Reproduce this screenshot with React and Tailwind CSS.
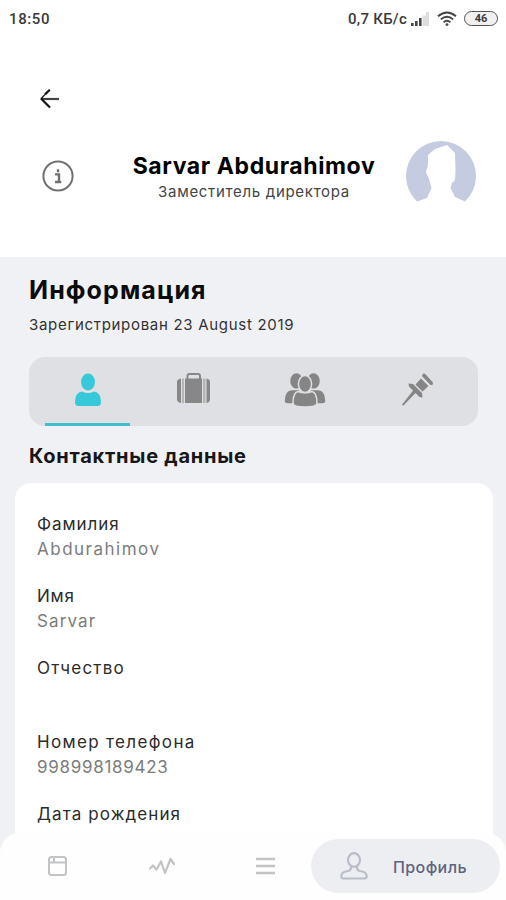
import React from 'react';

const fields = [
  { label: 'Фамилия', value: 'Abdurahimov', labelClass: 'tracking-[0.95px]', valueClass: 'tracking-[1.5px]' },
  { label: 'Имя', value: 'Sarvar', labelClass: 'tracking-[0.8px]', valueClass: 'tracking-[1.1px]' },
  { label: 'Отчество', value: '', labelClass: 'tracking-[1.2px]', valueClass: '' },
  { label: 'Номер телефона', value: '998998189423', labelClass: 'tracking-[1.35px]', valueClass: 'tracking-[0.7px]' },
  { label: 'Дата рождения', value: '', labelClass: 'tracking-[1.1px]', valueClass: '' },
];

const StatusBar = () => (
  <div className="flex h-9 items-center justify-between pl-[9px] pr-2 pt-px font-[Roboto,sans-serif] text-[15px] font-medium text-[#3a3a3a]">
    <span className="pt-px tracking-[0.6px]">18:50</span>
    <div className="flex items-center">
      <span className="mr-[3px] pt-px tracking-[0.25px]">0,7 КБ/с</span>
      <svg className="mr-[8px]" width="19" height="16" viewBox="0 0 19 16">
        <path d="M1 12h2.6v3H1zM5 10h2.6v5H5zM9 7h2.6v8H9z" fill="#444" />
        <path d="M12.5 4.5h3.5V15h-3.5zM16 1h3v14h-3z" fill="#dedede" />
      </svg>
      <svg className="mr-[7px]" width="20" height="16" viewBox="0 0 20 16" fill="none" stroke="#444" strokeWidth="1.9">
        <path d="M1 5.2Q10-2.4 19 5.2M3.8 8.4Q10 3 16.2 8.4M6.6 11.4Q10 8.2 13.4 11.4" />
        <circle cx="10" cy="13.6" r="1.4" fill="#444" stroke="none" />
      </svg>
      <div className="flex h-[15px] w-[34px] items-center justify-center rounded-full border-[1.5px] border-[#555] bg-[#f1f1f1] text-[11px] font-bold leading-none">
        46
      </div>
    </div>
  </div>
);

const Avatar = () => (
  <svg width="70" height="62" viewBox="0 0 70 62">
    <path
      d="M11 60.5A35 35 0 1 1 59 60.5L49 56L44.5 47L46 42L49 39L49.500 30L49 12L41 4L38 5L29 8L22 14L22 24L20 31L23 38L25.500 47L21 57Z"
      fill="#c5cbe1"
    />
  </svg>
);

const Header = () => (
  <header className="h-[257px] bg-white">
    <StatusBar />
    <button className="ml-[39px] mt-[53px] block">
      <svg width="21" height="20" viewBox="0 0 21 20" fill="none" stroke="#161616" strokeWidth="2.2">
        <path d="M10.800.8 6 5.400" />
        <path d="M20 10H3" stroke="#444" />
        <path d="M2 9.500l9 9" />
        <path d="M6 5.500 1.800 10" strokeWidth="1.200" />
      </svg>
    </button>
    <div className="mt-8 flex items-start pl-[42px] pr-[30px]">
      <svg className="mt-[19px]" width="32" height="32" viewBox="0 0 32 32">
        <circle cx="16" cy="16" r="14.600" fill="none" stroke="#707070" strokeWidth="2" />
        <path d="M16 9.200v3M13 14.400h4V22M13 22h6.200" fill="none" stroke="#707070" strokeWidth="2.400" />
      </svg>
      <div className="mt-[10px] flex-1 pl-[28px] text-center">
        <h1 className="whitespace-nowrap text-[23px] font-bold leading-[30px] tracking-[0.6px] text-black">Sarvar Abdurahimov</h1>
        <p className="whitespace-nowrap text-[15px] leading-[22px] tracking-[0.7px] text-[#444]">Заместитель директора</p>
      </div>
      <Avatar />
    </div>
  </header>
);

const Tabs = () => (
  <div className="ml-[29px] mr-[28px] mt-[21px] flex h-[69px] rounded-[16px] bg-[#dfe0e3] pl-4">
    <button className="flex w-[85px] flex-col items-center border-b-[3px] border-[#40bdd0] pt-4">
      <svg width="28" height="34" viewBox="0 0 28 34" fill="#37c8d9">
        <ellipse cx="14" cy="9" rx="7" ry="8.500" />
        <path d="M8 18.500Q14 21.500 20 18.500Q27 19.500 27 29.500Q27 33 23 33H5Q1 33 1 29.500Q1 19.500 8 18.500Z" />
      </svg>
    </button>
    <button className="ml-[46px] flex flex-col pt-[15px]">
      <svg width="35" height="34" viewBox="0 0 35 34" fill="#878787">
        <path d="M11.500 7V4Q11.500 2 13.500 2H22Q24 2 24 4V7" fill="none" stroke="#878787" strokeWidth="2" />
        <path d="M5 6.500V31Q1 30.500 1 27V10Q1 7 5 6.500ZM30.500 6.500V31Q34 30.500 34 27V10Q34 7 30.500 6.500ZM9 6.500H26V31H9Z" />
        <path d="M6 6.500H8V31H6ZM27 6.500H29.500V31H27Z" fill="#b4b5b6" />
      </svg>
    </button>
    <button className="ml-[73px] flex flex-col pt-[15px]">
      <svg width="42" height="36" viewBox="0 0 42 36" fill="#858585" stroke="#dfe0e3" strokeWidth="1.500">
        <ellipse cx="12.500" cy="9" rx="7" ry="8.500" />
        <ellipse cx="29.500" cy="9" rx="7" ry="8.500" />
        <path d="M8 17.500Q0 18 0 29Q0 32 4 32H16V17.500ZM34 17.500Q42 18 42 29Q42 32 38 32H26V17.500Z" />
        <path d="M14 19.500Q21 22 28 19.500Q33 20.500 33 31Q33 35 21 35Q9 35 9 31Q9 20.500 14 19.500Z" />
        <ellipse cx="21" cy="12" rx="6.600" ry="8.400" />
      </svg>
    </button>
    <button className="ml-[75px] flex flex-col pt-[16px]">
      <svg width="34" height="34" viewBox="0 0 34 34" fill="#858585">
        <path d="M22 .5L24 .7L32 9.500L31.500 12L29.500 12L21 3ZM20 5.500L27.500 13L21.500 18.500L14.500 11.500ZM7.500 10.500L12 11L21 20L21.500 24.500L18.500 24L8 13.500ZM12 17.500L14.500 20L2.500 32.500L.8 32Z" />
      </svg>
    </button>
  </div>
);

const BottomNav = () => (
  <nav className="absolute inset-x-0 bottom-0 flex h-[67px] items-center rounded-t-[20px] bg-[#fefefe] pb-px pl-12 pr-[6px]">
    <svg width="19" height="20" viewBox="0 0 19 20" fill="none" stroke="#c2c3c5" strokeWidth="2">
      <rect x="1" y="1" width="17" height="18" rx="2.500" />
      <path d="M1 6.500H18M6 1V6.500" />
    </svg>
    <svg className="ml-[82px]" width="26" height="18" viewBox="0 0 26 18" fill="none" stroke="#c2c3c5" strokeWidth="2.200" strokeLinejoin="round" strokeLinecap="round">
      <path d="M1 11.500L4 8.500L7.500 12.500L12 4.500L16 16L21.500 2L25 7" />
    </svg>
    <svg className="ml-[81px]" width="19" height="18" viewBox="0 0 19 18" stroke="#c2c3c5" strokeWidth="2.500">
      <path d="M0 2H19M0 9H19M0 16H19" />
    </svg>
    <button className="ml-auto flex h-[54px] w-[189px] items-center rounded-full bg-[#edeef2] pl-[29px]">
      <svg width="28" height="28" viewBox="0 0 28 28" fill="none" stroke="#b9bdc8" strokeWidth="2.200">
        <ellipse cx="14" cy="8" rx="6" ry="6.800" />
        <path d="M11 14Q11.500 18.500 8 19Q1.300 19.500 1.300 24.500Q1.300 26.500 4 26.500H24Q26.700 26.500 26.700 24.500Q26.700 19.500 20 19Q16.500 18.500 17 14" />
      </svg>
      <span className="ml-[25px] pt-px text-[16px] font-medium tracking-[0.4px] text-[#5d6480]">Профиль</span>
    </button>
  </nav>
);

const App = () => (
  <div className="relative flex h-[900px] w-[506px] flex-col overflow-hidden bg-[#f0f1f5] font-[Inter,sans-serif]">
    <Header />
    <main className="flex flex-1 flex-col">
      <h2 className="ml-[29px] mt-[16px] text-[25px] font-bold leading-[34px] tracking-[1.1px] text-[#0b0b0c]">Информация</h2>
      <p className="ml-[29px] mt-[6px] text-[15px] leading-[23px] tracking-[0.7px] text-[#333]">Зарегистрирован 23 August 2019</p>
      <Tabs />
      <h3 className="ml-[29px] mt-[17px] text-[20px] font-bold leading-[27px] tracking-[0.75px] text-[#17171a]">Контактные данные</h3>
      <div className="ml-[15px] mr-[13px] mt-[13px] flex-1 rounded-t-[16px] bg-white pl-[22px] pt-[29px]">
        {fields.map((field) => (
          <div key={field.label} className={field.label === 'Отчество' ? 'h-[74px]' : 'h-[72px]'}>
            <p className={`text-[17px] leading-[25px] text-[#2b2b2b] ${field.labelClass}`}>{field.label}</p>
            <p className={`text-[17px] leading-[24px] text-[#7c7c7c] ${field.valueClass}`}>{field.value}</p>
          </div>
        ))}
      </div>
    </main>
    <BottomNav />
  </div>
);

export default App;
